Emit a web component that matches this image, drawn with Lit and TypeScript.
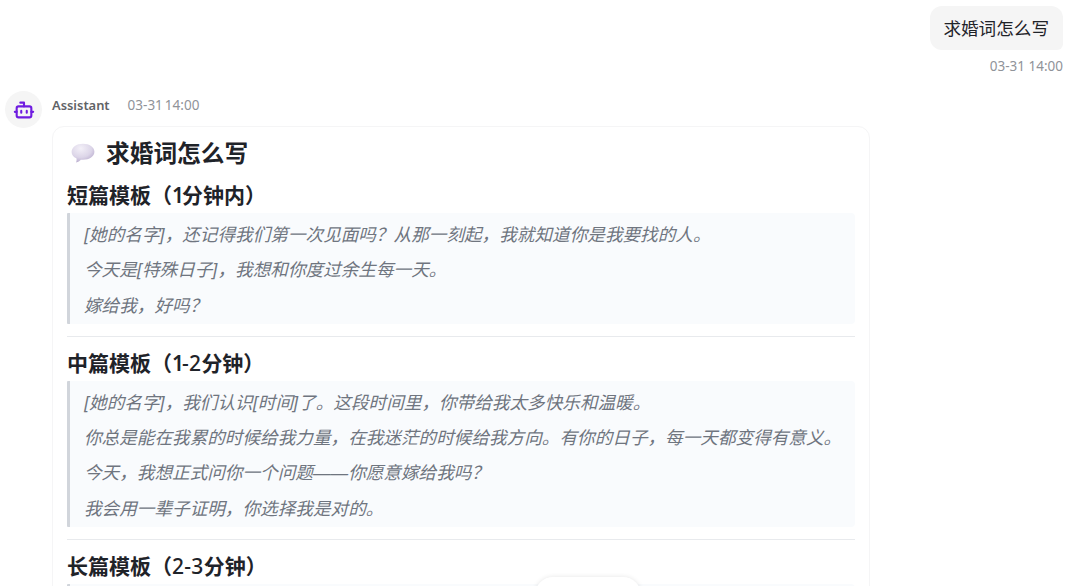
import { LitElement, html, css } from 'lit';
import { customElement } from 'lit/decorators.js';

interface Section {
  title: string;
  lines: string[];
}

const SECTIONS: Section[] = [
  {
    title: '短篇模板（1分钟内）',
    lines: [
      '[她的名字]，还记得我们第一次见面吗？从那一刻起，我就知道你是我要找的人。',
      '今天是[特殊日子]，我想和你度过余生每一天。',
      '嫁给我，好吗？',
    ],
  },
  {
    title: '中篇模板（1-2分钟）',
    lines: [
      '[她的名字]，我们认识[时间]了。这段时间里，你带给我太多快乐和温暖。',
      '你总是能在我累的时候给我力量，在我迷茫的时候给我方向。有你的日子，每一天都变得有意义。',
      '今天，我想正式问你一个问题——你愿意嫁给我吗？',
      '我会用一辈子证明，你选择我是对的。',
    ],
  },
  {
    title: '长篇模板（2-3分钟）',
    lines: [],
  },
];

@customElement('app-root')
export class AppRoot extends LitElement {
  static styles = css`
    :host {
      display: block;
      position: relative;
      height: 586px;
      overflow: hidden;
      background: #fff;
      color: #1f2329;
      font-family: 'Noto Sans', 'Noto Sans CJK SC', sans-serif;
    }

    .user {
      display: flex;
      flex-direction: column;
      align-items: flex-end;
      padding: 6px 17px 0 0;
    }

    .bubble {
      box-sizing: border-box;
      height: 44px;
      padding: 0 14px 0 13px;
      border-radius: 12px 12px 6px 12px;
      background: #f5f5f5;
      font-size: 17.6px;
      line-height: 44px;
    }

    .time {
      color: #909399;
      font-size: 13.5px;
      line-height: 18px;
    }

    .user .time {
      margin-top: 7px;
    }

    .assistant {
      display: flex;
      gap: 10px;
      padding: 16px 0 0 5px;
    }

    .avatar {
      display: flex;
      align-items: center;
      justify-content: center;
      width: 37px;
      height: 37px;
      border-radius: 50%;
      background: #f5f5f5;
    }

    .avatar svg {
      width: 22px;
      height: 22px;
    }

    .meta {
      display: flex;
      gap: 18px;
      height: 35px;
      padding-top: 5px;
      box-sizing: border-box;
    }

    .meta .time {
      word-spacing: -1.5px;
    }

    .name {
      color: #606266;
      font-size: 12.9px;
      font-weight: 600;
      line-height: 18px;
    }

    .card {
      box-sizing: border-box;
      width: 818px;
      height: 600px;
      padding: 9px 14px;
      border: 1px solid #f5f5f6;
      border-radius: 12px;
    }

    h1 {
      display: flex;
      align-items: center;
      gap: 11px;
      height: 34px;
      margin: 0 0 8px 4px;
      font-size: 23.7px;
      line-height: 34px;
    }

    h2 {
      height: 35px;
      margin: 0;
      font-size: 21px;
      line-height: 34px;
    }

    .num {
      font-weight: 500;
      letter-spacing: 0.3px;
    }

    .narrow {
      font-weight: 600;
      letter-spacing: -2px;
    }

    .quote {
      min-height: 30px;
      margin: 0;
      padding: 4px 14px 1.5px;
      border-left: 3px solid #d1d5db;
      border-radius: 1px 4px 4px 1px;
      background: #f9fbfd;
      color: #6f757f;
      font-size: 17.62px;
      font-style: italic;
    }

    p {
      margin: 0;
      line-height: 35.25px;
      white-space: nowrap;
    }

    .dash {
      font-family: 'Liberation Sans', sans-serif;
      line-height: 1;
    }

    hr {
      height: 1px;
      margin: 11.6px 0 9px;
      border: 0;
      background: #e8eaed;
    }

    .pill {
      position: absolute;
      top: 577px;
      left: 535px;
      width: 106px;
      height: 36px;
      border-radius: 18px;
      background: #fff;
      box-shadow: 0 0 5px rgba(0, 0, 0, 0.1);
    }
  `;

  // The digits are set lighter than the CJK text, with a tight "1"
  renderTitle(title: string) {
    return title
      .split(/([\d-])/)
      .map(part =>
        /^[\d-]$/.test(part)
          ? html`<span class=${part === '1' ? 'num narrow' : 'num'}>${part}</span>`
          : part
      );
  }

  // The long dash has to fill two full CJK cells
  renderLine(line: string) {
    return line
      .split(/(——)/)
      .map(part =>
        part === '——' ? html`<span class="dash">${part}</span>` : part
      );
  }

  render() {
    return html`
      <div class="user">
        <div class="bubble">求婚词怎么写</div>
        <div class="time">03-31 14:00</div>
      </div>
      <div class="assistant">
        <div class="avatar">
          <svg
            viewBox="0 0 24 24"
            fill="none"
            stroke="#6f1ce0"
            stroke-width="2.3"
            stroke-linecap="round"
            stroke-linejoin="round"
          >
            <path d="M12 8V4H8M2 14h2M20 14h2M9 13v2M15 13v2" />
            <rect x="4" y="8" width="16" height="12" rx="2" />
          </svg>
        </div>
        <div>
          <div class="meta">
            <span class="name">Assistant</span>
            <span class="time">03-31 14:00</span>
          </div>
          <div class="card">
            <h1>
              <svg width="24" height="20" viewBox="0 0 24 20">
                <defs>
                  <radialGradient id="balloon" cx="0.4" cy="0.25" r="0.8">
                    <stop offset="0" stop-color="#f3f0f8" />
                    <stop offset="0.6" stop-color="#dcd5e8" />
                    <stop offset="1" stop-color="#b5a8cb" />
                  </radialGradient>
                </defs>
                <path
                  d="M12 .8C18.400.8 23.400 4.300 23.400 8.800s-5 8-11.400 8c-.8 0-1.500 0-2.200-.1-1.200 1.400-2.500 2.300-4.700 2.700.5-1.200.7-2.800.3-4.100C2.500 13.800.600 11.700.600 8.900.600 4.300 5.600.8 12 .8z"
                  fill="url(#balloon)"
                />
              </svg>
              求婚词怎么写
            </h1>
            ${SECTIONS.map(
              (section, i) => html`
                ${i ? html`<hr />` : ''}
                <h2>${this.renderTitle(section.title)}</h2>
                <blockquote class="quote">
                  ${section.lines.map(
                    line => html`<p>${this.renderLine(line)}</p>`
                  )}
                </blockquote>
              `
            )}
          </div>
        </div>
      </div>
      <div class="pill"></div>
    `;
  }
}
